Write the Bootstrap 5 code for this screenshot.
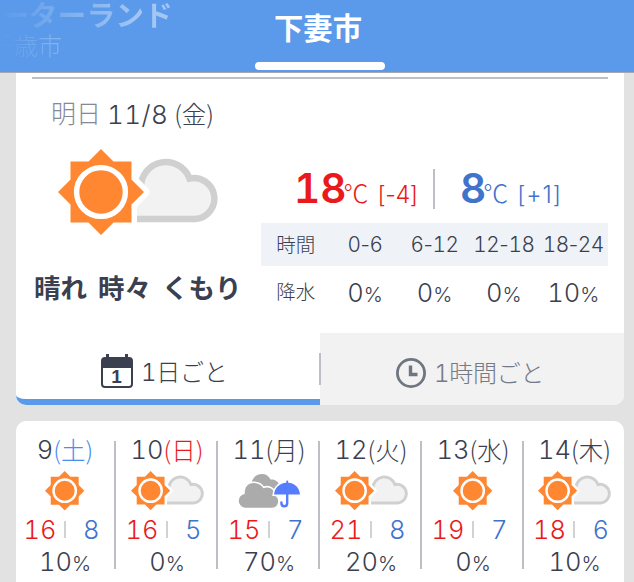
<!DOCTYPE html>
<html lang="ja">
<head>
<meta charset="utf-8">
<meta name="viewport" content="width=device-width, initial-scale=1">
<title>下妻市の天気</title>
<link rel="stylesheet" href="https://cdn.jsdelivr.net/npm/bootstrap@5.3.0/dist/css/bootstrap.min.css">
<style>
:root{--ink:#3a4050;--hot:#ea1a1c;--cold:#3f73cc;--sky:#5b9aea;--rule:#bcc0c5}
body{background:#e2e2e2;color:var(--ink);font-family:Inter,"Noto Sans CJK JP",sans-serif;font-weight:300;font-feature-settings:"tnum";height:582px;overflow:hidden;line-height:1}
.hot{color:var(--hot)}.cold{color:var(--cold)}
.pn,.pc small{font-feature-settings:"tnum" 0}
.wd{font-family:"Noto Sans CJK JP",sans-serif;font-size:24.5px}
.topbar{height:73px;background:var(--sky);border-bottom:1px solid #a3a9ae;color:#fff}
.place-prev{width:255px;margin-left:-10px;padding-top:2px}
.place-prev .t1{font-size:28.8px;line-height:28px;font-weight:700;padding-left:10px;background:linear-gradient(90deg,#fff0 8px,#ffffff70 150px);-webkit-background-clip:text;background-clip:text;color:transparent}
.place-prev .t2{font-size:24px;line-height:34px;background:linear-gradient(90deg,#fff0 10px,#ffffff4d 75px);-webkit-background-clip:text;background-clip:text;color:transparent}
.place-now{width:130px;margin-left:10px}
.place-now h1{font-size:29.3px;line-height:57px;height:62px;font-weight:700;padding-right:4px}
.place-now i{height:8px;border-radius:4px;background:#fff}
.panel{width:608px;margin-left:16px;background:#fff}
.today{height:332px;border-radius:0 0 10px 10px}
.hr-top{height:2px;margin:0 16px;background:var(--rule)}
.daytitle{height:70px;padding:1px 0 0 35px;font-size:25px}
.daytitle .lbl{color:#858997;margin-right:6px}
.daytitle .dnum{font-size:26px;letter-spacing:.4px}
.daytitle .wd{margin-left:6px}
.main-row{height:184px}
.left-col{width:245px}
.left-col svg{margin-left:42px}
.cond{font-size:26.5px;font-weight:700;margin:36px 0 0 18px;line-height:34px;gap:11px}
.right-col{width:347px;margin-right:16px}
.temps{height:74px;padding:20px 0 0 33px}
.temps b{font-size:40.5px;font-weight:600}
.temps .deg{font-size:25px;font-family:"Noto Sans CJK JP",sans-serif;margin-left:-3px}
.temps .diff{font-size:23.5px;margin-left:9px}
.temps .tmax .diff{letter-spacing:-.4px}
.temps .cold .diff{letter-spacing:.9px}
.temps .tmax{width:139px}
.temps .cut{width:2px;height:40px;background:var(--rule);margin:0 25px 0 0}
.rain>div{height:43px;width:20%;white-space:nowrap}
.rain .hd{background:#eff3f7;font-size:20.8px;padding-top:2px;letter-spacing:-.4px}
.rain .hd.jp,.rain .pc.jp{font-size:19.5px;letter-spacing:0}
.rain .pc{height:54px;font-size:25.500px}
.pc small{font-size:.8em}
.tabs-row{height:72px}
.tab-a,.tab-b{width:304px;font-size:24px;padding-top:10px}
.tab-a span{padding-top:3px}
.tab-b span{padding-top:1px}
.tab-a span,.tab-b span{letter-spacing:-.3px}
.tab-a{border-bottom:6px solid var(--sky);border-radius:0 0 0 10px;padding-left:85px}
.tab-b{background:#f2f2f2;color:#747a86;border-radius:0 0 10px 0;padding-left:76px;padding-top:8px}
.tab-b:before{content:"";width:2px;height:32px;background:var(--rule);margin:-8px 75px 0 -77px}
.week{height:170px;margin-top:16px;border-radius:10px 10px 0 0}
.day{width:102px;padding:15px 0 0;font-size:25.500px}
.day:first-child{width:100px;padding-right:2px}
.day:last-child{width:100px;padding-left:1px}
.day .dt{height:28px;white-space:nowrap}
.day .ic{height:55px;padding-bottom:1px}
.day .tp{height:21px;width:69px}
.day .tp span{width:32px;text-align:right}
.day .tp .hot{margin-left:-7px}
.day .tp i{width:2px;height:17px;background:#d2d2d4;margin-left:6px}
.day .pc{height:43px}
.vline{width:2px;height:128px;margin-top:20px;margin-left:-2px;background:var(--rule)}
.sat{color:#4a8cf0}
</style>
<script src="https://cdn.jsdelivr.net/npm/bootstrap@5.3.0/dist/js/bootstrap.bundle.min.js"></script>
</head>
<body>
<svg width="0" height="0" class="position-absolute">
<defs>
<symbol id="sun" viewBox="0 0 86 86"><path fill="#ff8732" d="M43 0 55.5 12.5H73.5V30.5L86 43 73.5 55.5V73.5H55.5L43 86 30.5 73.5H12.5V55.5L0 43 12.5 30.5V12.5H30.5z"/><circle cx="43" cy="43" r="24.4" fill="none" stroke="#fff" stroke-width="5.4"/></symbol>
<symbol id="suncloud" viewBox="0 0 160 86"><path d="M70 70H137A20.500 20.500 0 1 0 131.500 29.500A25 25 0 0 0 83 38L70 60z" fill="#f2f2f2" stroke="#d0d0d0" stroke-width="6.500"/><path fill="#fff" stroke="#fff" stroke-width="11" stroke-linejoin="round" d="M43 0 55.500 12.500H73.500V30.500L86 43 73.500 55.500V73.500H55.500L43 86 30.500 73.500H12.500V12.500z"/><use href="#sun" width="86" height="86"/></symbol>
</defs></svg>

<header class="topbar d-flex">
  <div class="place-prev text-nowrap"><div class="t1">ーターランド</div><div class="t2">千歳市</div></div>
  <div class="place-now d-flex flex-column text-center"><h1 class="m-0">下妻市</h1><i></i></div>
</header>

<main>
<section class="panel today">
  <div class="pt-1"><div class="hr-top"></div></div>
  <div class="daytitle d-flex align-items-center"><span class="lbl">明日</span><span class="dnum">11/8</span><span class="wd">(金)</span></div>
  <div class="main-row d-flex">
    <div class="left-col">
      <svg class="d-block" width="160" height="86"><use href="#suncloud" width="160" height="86"/></svg>
      <div class="cond d-flex text-nowrap"><span>晴れ</span><span>時々</span><span>くもり</span></div>
    </div>
    <div class="right-col">
      <div class="temps d-flex align-items-start text-nowrap">
        <div class="tmax hot d-flex align-items-baseline"><b>18</b><span class="deg">℃</span><span class="diff pn">[-4]</span></div>
        <div class="cut"></div>
        <div class="cold d-flex align-items-baseline"><b>8</b><span class="deg">℃</span><span class="diff pn">[+1]</span></div>
      </div>
      <div class="rain d-flex flex-wrap text-center">
        <div class="hd jp d-flex align-items-center justify-content-center">時間</div><div class="hd d-flex align-items-center justify-content-center">0<span class="pn">-</span>6</div><div class="hd d-flex align-items-center justify-content-center">6<span class="pn">-</span>12</div><div class="hd d-flex align-items-center justify-content-center">12<span class="pn">-</span>18</div><div class="hd d-flex align-items-center justify-content-center">18<span class="pn">-</span>24</div>
        <div class="pc jp d-flex align-items-center justify-content-center">降水</div><div class="pc d-flex align-items-center justify-content-center"><span>0<small>%</small></span></div><div class="pc d-flex align-items-center justify-content-center"><span>0<small>%</small></span></div><div class="pc d-flex align-items-center justify-content-center"><span>0<small>%</small></span></div><div class="pc d-flex align-items-center justify-content-center"><span>10<small>%</small></span></div>
      </div>
    </div>
  </div>
  <div class="tabs-row d-flex">
    <div class="tab-a d-flex align-items-center">
      <svg width="32" height="34" viewBox="0 0 32 34"><path fill="#3a4050" d="M5 0h3v3h16V0h3v3h1a4 4 0 0 1 4 4v23a4 4 0 0 1-4 4H4a4 4 0 0 1-4-4V7a4 4 0 0 1 4-4h1z"/><path fill="#fff" d="M2 14h28v16a2 2 0 0 1-2 2H4a2 2 0 0 1-2-2z"/><text x="15.500" y="29" text-anchor="middle" font-family="Liberation Sans,sans-serif" font-weight="700" font-size="19" fill="#3a4050">1</text></svg>
      <span class="ms-2">1日ごと</span>
    </div>
    <div class="tab-b d-flex align-items-center">
      <svg width="30" height="30" viewBox="0 0 30 30" fill="none" stroke="#6f7682"><circle cx="15" cy="15" r="13.600" stroke-width="2.800"/><path d="M14.500 7.500v9h7" stroke-width="3.400"/></svg>
      <span class="ms-2">1時間ごと</span>
    </div>
  </div>
</section>

<section class="panel week d-flex" id="week"></section>
</main>
<script>
const days=[["9","土","sat","s",16,8,10],["10","日","hot","c",16,5,0],["11","月","","r",15,7,70],["12","火","","c",21,8,20],["13","水","","s",19,7,0],["14","木","","c",18,6,10]];
const icons={
 s:'<svg width="39.400" height="39.400"><use href="#sun" width="39.400" height="39.400"/></svg>',
 c:'<svg width="73" height="39.300"><use href="#suncloud" width="73" height="39.300"/></svg>',
 r:'<svg width="63" height="35" viewBox="0 0 63 35"><path fill="#ababab" d="M14 7C16 2.500 19 0 24 0C28 0 31 2 32.500 5.500C37 5 40.500 7.500 41.500 11.500L38 22H14z"/><path fill="#ababab" stroke="#fff" stroke-width="3" paint-order="stroke" d="M7 33.700A6.900 6.900 0 0 1 6.700 20C6.500 13 10 9 15.500 9C20 9 23.500 11 25.300 14.200C32 11.500 37 16 37 22C42 24 41 33.700 34 33.700z"/><path fill="#567cff" stroke="#fff" stroke-width="3" paint-order="stroke" d="M36 20.500C37 13 42 9 48.200 8.700V7.500a1 1 0 0 1 2 0v1.200C57 9 61.500 14 62 20.500z"/><path fill="none" stroke="#fff" stroke-width="5" d="M49.200 22v7q0 3.300-2.900 3.300t-2.900-3.300"/><path fill="none" stroke="#567cff" stroke-width="2.400" stroke-linecap="round" d="M49.200 20v9q0 3.300-2.900 3.300t-2.900-3.300v-.6"/></svg>'};
document.getElementById("week").innerHTML=days.map(([d,w,c,i,h,l,p],n)=>`<div class="day d-flex flex-column align-items-center"><div class="dt d-flex align-items-center">${d}<span class="wd ${c}">(${w})</span></div><div class="ic d-flex align-items-center">${icons[i]}</div><div class="tp d-flex align-items-center justify-content-between"><span class="hot">${h}</span><i></i><span class="cold">${l}</span></div><div class="pc d-flex align-items-center"><span>${p}<small>%</small></span></div></div>`+(n<5?'<div class="vline"></div>':'')).join("");
</script>
</body>
</html>
